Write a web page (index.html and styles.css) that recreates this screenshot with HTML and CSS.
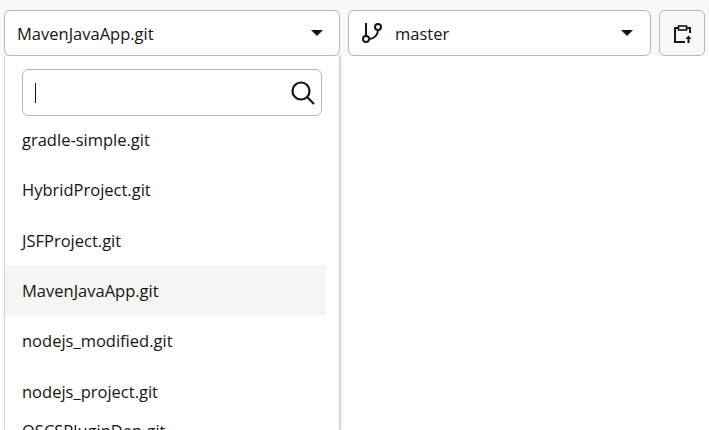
FILE: index.html
```html
<!DOCTYPE html>
<html lang="en">
<head>
<meta charset="utf-8">
<title>Repository</title>
<link rel="stylesheet" href="styles.css">
</head>
<body>
<div class="toolbar">
  <div class="select repo"><span class="label">MavenJavaApp.git</span><span class="caret"></span></div>
  <div class="select branch">
    <svg class="branch-icon" width="24" height="24" viewBox="0 0 24 24" fill="none" stroke="#161513" stroke-width="2"><path d="M5 2v13"/><circle cx="5" cy="18" r="3"/><circle cx="17" cy="6" r="3"/><path d="M17 9c0 5-4 9-9 9"/></svg>
    <span class="label">master</span><span class="caret"></span>
  </div>
  <div class="icon-btn">
    <svg width="20" height="20" viewBox="0 0 20 20" fill="none" stroke="#161513" stroke-width="2"><path d="M6 5H3v14h10"/><path d="M15 5h3v5"/><rect x="6.500" y="3" width="8" height="4" stroke-width="1.600"/><path d="M16.500 20v-6"/><path d="M13.500 16l3-3.500 3 3.500z" fill="#161513" stroke="none"/></svg>
  </div>
</div>
<div class="main">
  <div class="dropdown">
    <div class="search">
      <span class="cursor"></span>
      <svg class="search-icon" width="26" height="26" viewBox="0 0 26 26" fill="none" stroke="#161513" stroke-width="2.200"><circle cx="11" cy="11" r="8.500"/><path d="M17 17l7 7"/></svg>
    </div>
    <ul class="list">
      <li class="item raised">gradle-simple.git</li>
      <li class="item raised">HybridProject.git</li>
      <li class="item">JSFProject.git</li>
      <li class="item current">MavenJavaApp.git</li>
      <li class="item">nodejs_modified.git</li>
      <li class="item tall">nodejs_project.git</li>
      <li class="item short">OSCSPluginDep.git</li>
    </ul>
  </div>
</div>
</body>
</html>
```

FILE: styles.css
```css
* { box-sizing: border-box; }
html, body { margin: 0; height: 100%; }
body {
  width: 709px;
  height: 430px;
  overflow: hidden;
  background: #fff;
  font-family: "Open Sans", "Noto Sans", sans-serif;
  font-size: 16.5px;
  color: #161513;
}
.toolbar {
  display: flex;
  gap: 8px;
  height: 56px;
  padding: 10px 4px 0;
  background: #f9f8f6;
}
.select {
  display: flex;
  align-items: center;
  height: 46px;
  padding: 0 16px 0 12px;
  background: #fff;
  border: 1px solid #b9b7b4;
  border-radius: 6px;
}
.repo { width: 336px; }
.branch { width: 303px; padding-right: 17px; }
.branch-icon { margin-right: 10px; }
.label { flex: 1; }
.caret {
  width: 0;
  height: 0;
  border-left: 6px solid transparent;
  border-right: 6px solid transparent;
  border-top: 6px solid #161513;
}
.icon-btn {
  display: flex;
  align-items: center;
  justify-content: center;
  width: 46px;
  height: 46px;
  border: 1px solid #b9b7b4;
  border-radius: 6px;
}
.main { height: 374px; padding-left: 4px; }
.dropdown {
  width: 336px;
  height: 374px;
  overflow: hidden;
  padding-top: 13px;
  background: #fff;
  border-left: 1px solid #d6d3cf;
  border-right: 1px solid #cfccc8;
  box-shadow: 1px 0 3px rgba(0,0,0,.18);
}
.search {
  display: flex;
  align-items: center;
  justify-content: space-between;
  width: 300px;
  height: 47px;
  margin-left: 17px;
  padding: 0 5px 0 12px;
  border: 1px solid #b9b7b4;
  border-radius: 6px;
}
.cursor { width: 1px; height: 20px; background: #161513; }
.list {
  list-style: none;
  margin: -1px 0 0;
  padding: 0;
  width: 321px;
}
.item {
  display: flex;
  align-items: center;
  height: 50px;
  padding-left: 17px;
}
.raised { padding-bottom: 2px; }
.current { background: #f5f5f4; }
.tall { height: 52px; }
.short { height: 26px; }
```
